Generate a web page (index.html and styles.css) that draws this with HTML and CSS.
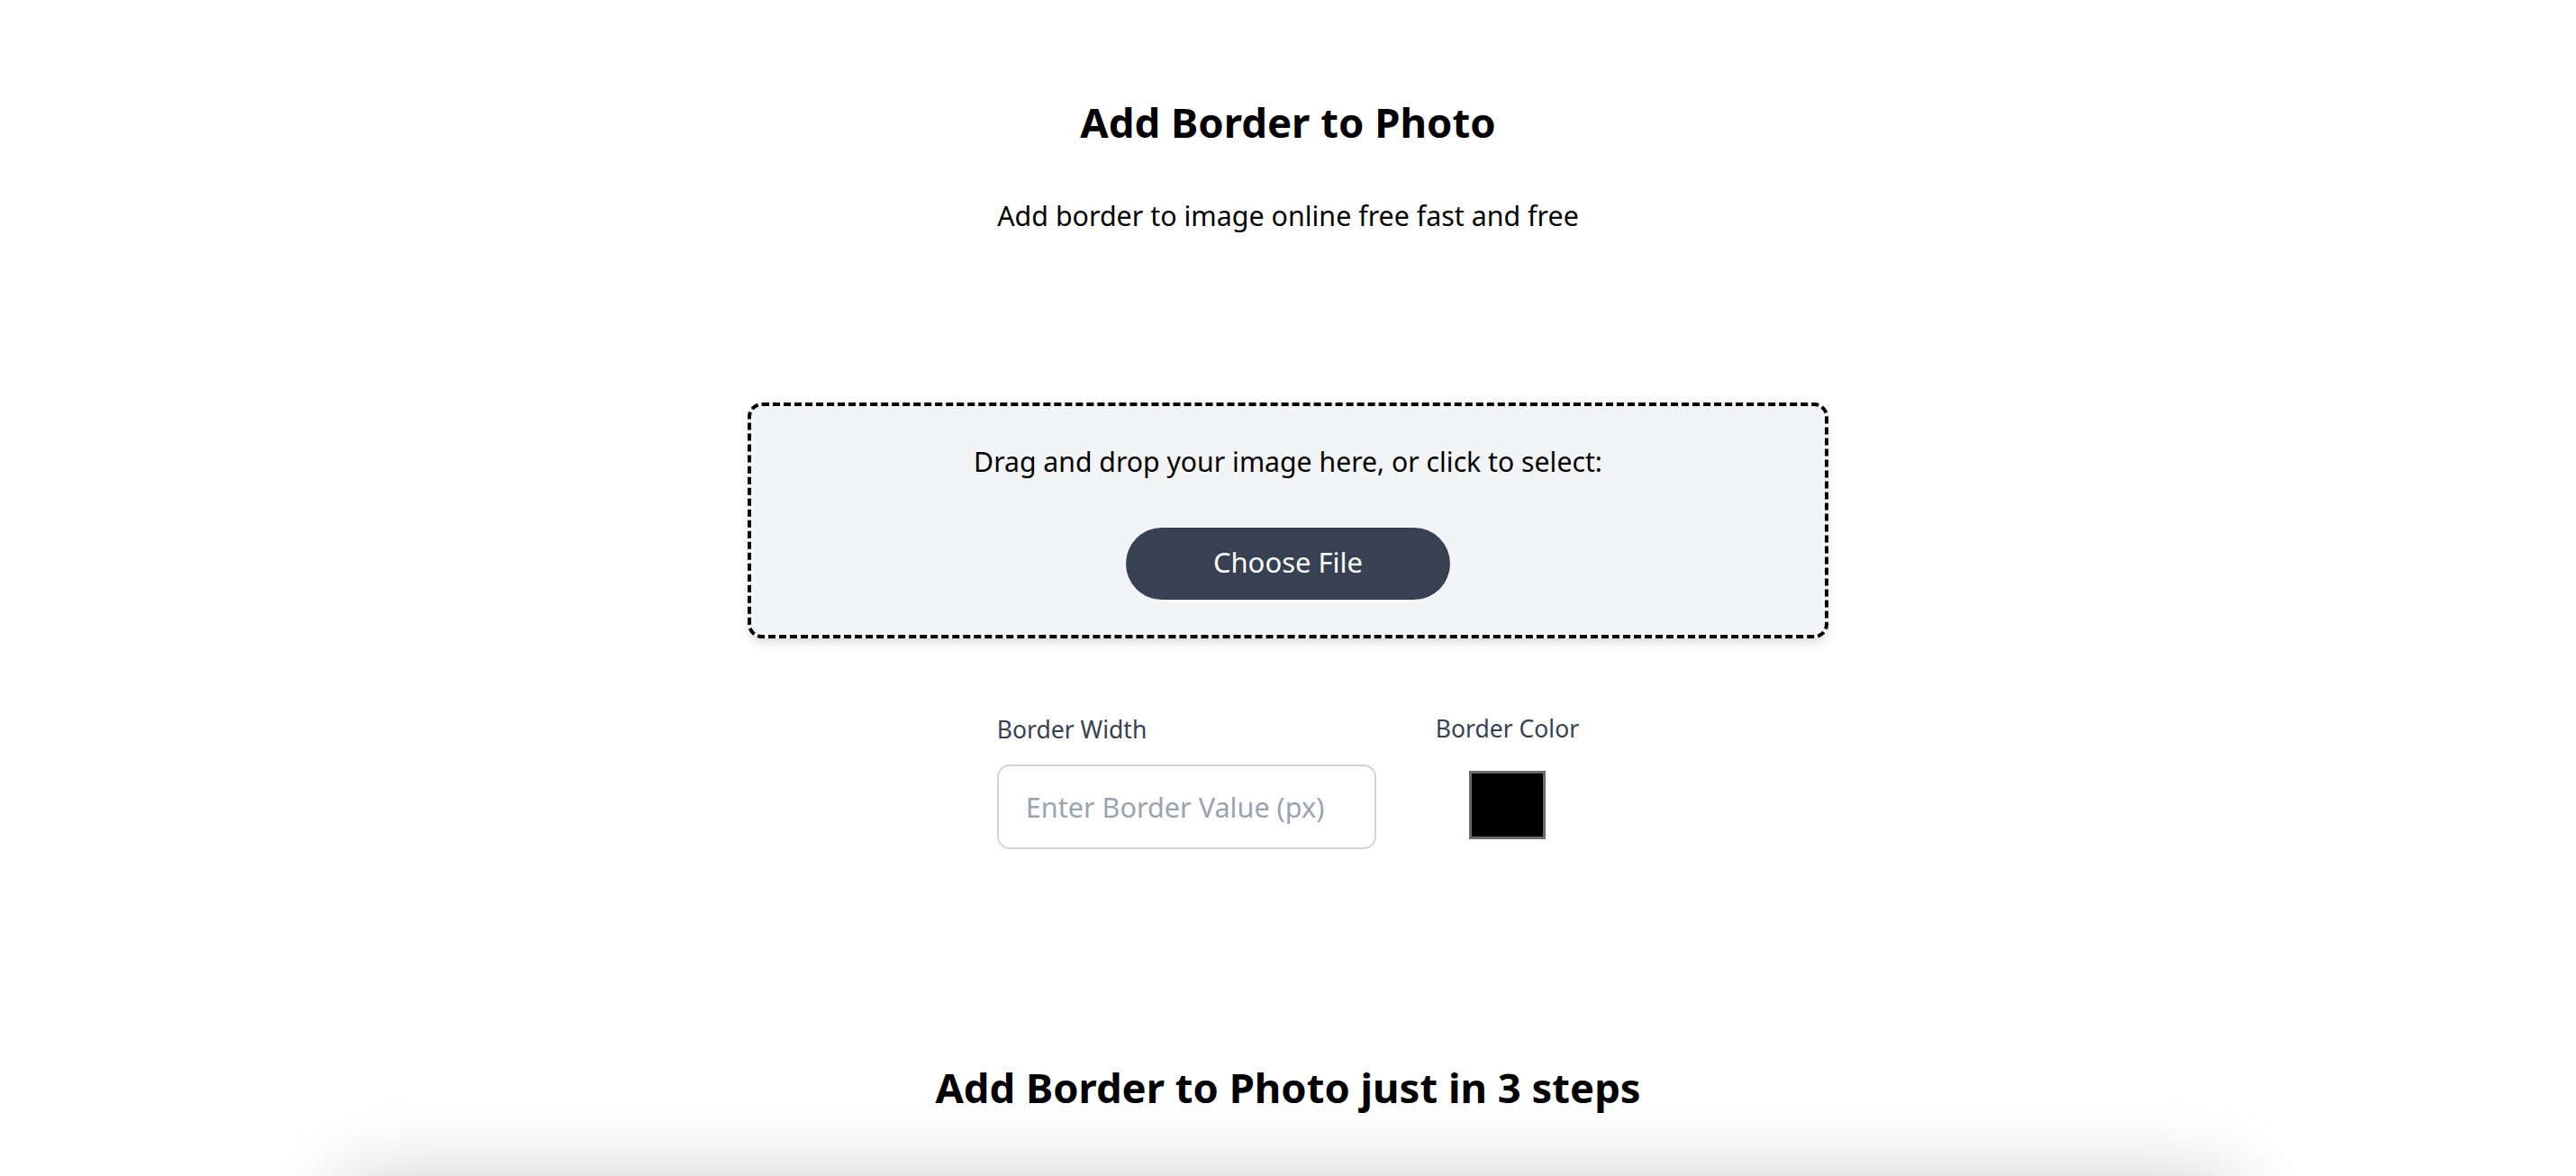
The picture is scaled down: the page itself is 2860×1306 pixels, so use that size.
FILE: index.html
```html
<!DOCTYPE html>
<html lang="en">
<head>
<meta charset="utf-8">
<title>Add Border to Photo</title>
<link rel="stylesheet" href="styles.css">
</head>
<body>
<main class="page">
  <section class="hero">
    <h1 class="title">Add Border to Photo</h1>
    <p class="subtitle">Add border to image online free fast and free</p>
  </section>

  <section class="dropzone">
    <p class="drop-text">Drag and drop your image here, or click to select:</p>
    <button class="choose-btn" type="button">Choose File</button>
  </section>

  <section class="controls">
    <div class="field field-width">
      <label class="field-label" for="bw">Border Width</label>
      <input class="text-input" id="bw" type="text" placeholder="Enter Border Value (px)">
    </div>
    <div class="field field-color">
      <label class="field-label label-color" for="bc">Border Color</label>
      <input class="color-input" id="bc" type="color" value="#000000">
    </div>
  </section>

  <section class="steps">
    <h2 class="steps-title">Add Border to Photo just in 3 steps</h2>
    <div class="steps-card"></div>
  </section>
</main>
</body>
</html>
```
FILE: styles.css
```css
* { box-sizing: border-box; }

html, body {
  margin: 0;
  padding: 0;
  background: #ffffff;
}

body {
  font-family: "Noto Sans", "Open Sans", sans-serif;
  color: #000000;
  overflow: hidden;
}

.page {
  display: flex;
  flex-direction: column;
  align-items: center;
  padding-top: 105px;
}

.hero {
  display: flex;
  flex-direction: column;
  align-items: center;
}

.title {
  margin: 0;
  font-size: 45.5px;
  line-height: 60px;
  font-weight: 700;
}

.subtitle {
  margin: 53px 0 0;
  font-size: 30.4px;
  line-height: 44px;
  font-weight: 400;
}

.dropzone {
  margin-top: 185px;
  width: 1200px;
  background: #f3f4f6;
  border: 4px dashed #000000;
  border-radius: 16px;
  padding: 42px 0 39px;
  display: flex;
  flex-direction: column;
  align-items: center;
  box-shadow: 0 8px 14px -2px rgba(0, 0, 0, 0.1), 0 4px 8px -4px rgba(0, 0, 0, 0.1);
}

.drop-text {
  margin: 0;
  font-size: 30.2px;
  line-height: 40px;
}

.choose-btn {
  margin-top: 53px;
  width: 360px;
  height: 80px;
  border: none;
  border-radius: 40px;
  background: #374151;
  color: #ffffff;
  font-family: inherit;
  font-size: 31px;
  line-height: 40px;
  padding: 0 0 4px;
  cursor: pointer;
}

.controls {
  margin-top: 79px;
  display: flex;
  align-items: flex-start;
  gap: 66px;
}

.field {
  display: flex;
  flex-direction: column;
}

.field-width {
  padding-top: 2px;
  width: 421px;
}

.field-color {
  align-items: center;
}

.field-label {
  font-size: 26.5px;
  line-height: 40px;
  color: #374151;
  margin-bottom: 19px;
}

.label-color {
  margin-top: 1px;
  margin-bottom: 27px;
}

.text-input {
  width: 421px;
  height: 94px;
  border: 2px solid #d1d5db;
  border-radius: 14px;
  padding: 0 30px;
  font-family: inherit;
  font-size: 30.6px;
  color: #111827;
  background: #ffffff;
  outline: none;
}

.text-input::placeholder {
  color: #9ca3af;
}

.color-input {
  -webkit-appearance: none;
  appearance: none;
  width: 85px;
  height: 76px;
  padding: 0;
  border: none;
  background: transparent;
  cursor: pointer;
}

.color-input::-webkit-color-swatch-wrapper {
  padding: 0;
}

.color-input::-webkit-color-swatch {
  border: 3px solid #6b6b6b;
  border-radius: 0;
}

.steps {
  margin-top: 234px;
  width: 100%;
  display: flex;
  flex-direction: column;
  align-items: center;
}

.steps-title {
  margin: 0;
  font-size: 45.4px;
  line-height: 60px;
  font-weight: 700;
}

.steps-card {
  margin-top: 94px;
  width: 2100px;
  height: 500px;
  background: #ffffff;
  border-radius: 24px;
  box-shadow: 0 -10px 100px rgba(0, 0, 0, 0.26);
}
```
